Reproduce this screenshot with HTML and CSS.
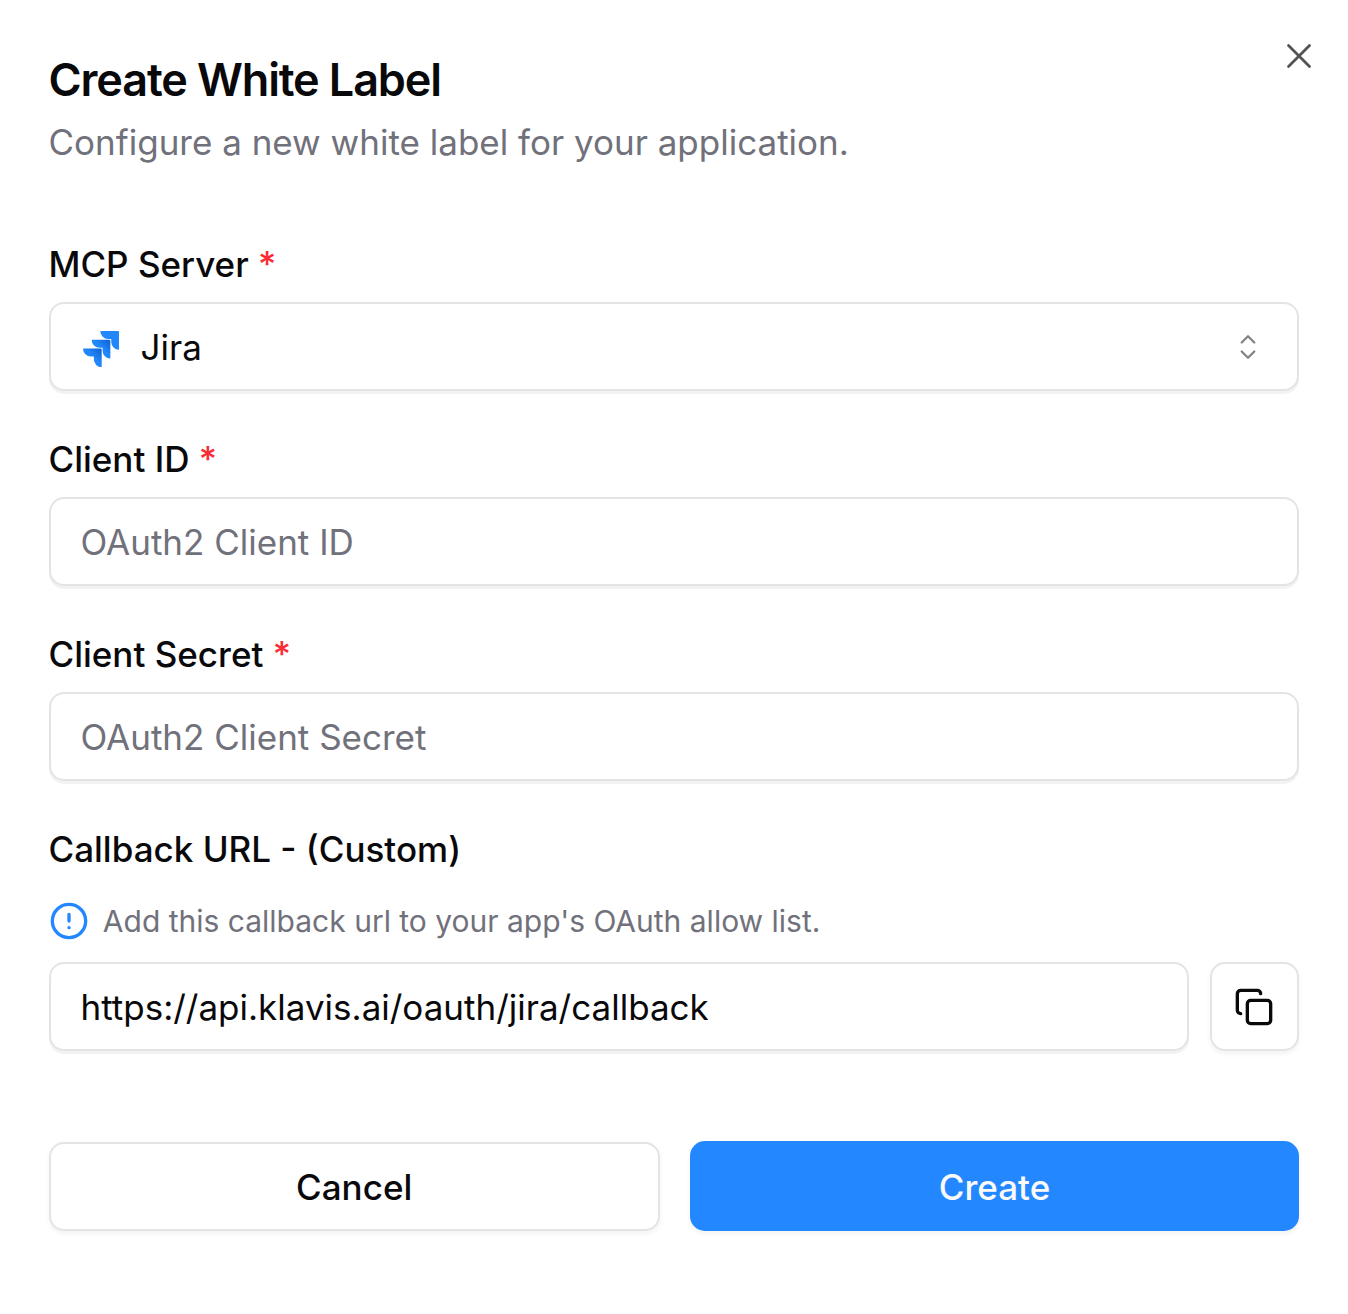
FILE: index.html
```html
<!DOCTYPE html>
<html lang="en">
<head>
<meta charset="utf-8">
<title>Create White Label</title>
<link rel="stylesheet" href="styles.css">
</head>
<body>
<main class="dialog">
  <button class="close" type="button" aria-label="Close">
    <svg viewBox="0 0 24 24" fill="none" stroke="currentColor" stroke-width="1.6" stroke-linecap="round"><path d="M18 6 6 18M6 6l12 12"/></svg>
  </button>
  <header class="header">
    <h1 class="title">Create White Label</h1>
    <p class="description">Configure a new white label for your application.</p>
  </header>
  <form class="form">
    <div class="field">
      <div class="label">MCP Server <span class="required">*</span></div>
      <div class="control select">
        <svg class="jira" viewBox="0 0 37 37">
          <defs>
            <linearGradient id="mid" x1="27" y1="9.500" x2="18.500" y2="18" gradientUnits="userSpaceOnUse"><stop offset="0.15" stop-color="#1468d8"/><stop offset="0.9" stop-color="#2187fb"/></linearGradient>
            <linearGradient id="low" x1="18" y1="18.500" x2="9.500" y2="27" gradientUnits="userSpaceOnUse"><stop offset="0.15" stop-color="#1468d8"/><stop offset="0.9" stop-color="#2187fb"/></linearGradient>
          </defs>
          <path fill="#2187fb" d="M36.100 0H17.800a8.200 8.200 0 0 0 8.200 8.200h3v3.100a8.200 8.200 0 0 0 8 8V.9a.9.9 0 0 0-.9-.9z"/>
          <path fill="url(#mid)" d="M27.200 9H8.900a8.200 8.200 0 0 0 8.200 8.200h3v3.100a8.200 8.200 0 0 0 8 8V9.900a.9.9 0 0 0-.9-.9z"/>
          <path fill="url(#low)" d="M18.300 18H0a8.200 8.200 0 0 0 8.200 8.200h3v3.100a8.200 8.200 0 0 0 8 8V18.900a.9.9 0 0 0-.9-.9z"/>
        </svg>
        <span>Jira</span>
        <svg class="chevrons" viewBox="0 0 16 26" fill="none" stroke="currentColor" stroke-width="2.300" stroke-linecap="round" stroke-linejoin="round"><path d="m1.700 8.500 6.300-6.300 6.300 6.300M1.700 17.500l6.300 6.300 6.300-6.300"/></svg>
      </div>
    </div>
    <div class="field">
      <label class="label" for="client-id">Client ID <span class="required">*</span></label>
      <input class="control" id="client-id" placeholder="OAuth2 Client ID">
    </div>
    <div class="field">
      <label class="label" for="client-secret">Client Secret <span class="required">*</span></label>
      <input class="control" id="client-secret" placeholder="OAuth2 Client Secret">
    </div>
    <div class="field callback">
      <label class="label" for="callback">Callback URL - (Custom)</label>
      <div class="hint">
        <svg class="alert" viewBox="0 0 24 24" fill="none" stroke="currentColor" stroke-width="2" stroke-linecap="round"><circle cx="12" cy="12" r="10"/><path d="M12 8v4M12 16h.01"/></svg>
        <span>Add this callback url to your app's OAuth allow list.</span>
      </div>
      <div class="copy-row">
        <input class="control" id="callback" value="https://api.klavis.ai/oauth/jira/callback" readonly>
        <button class="button copy" type="button" aria-label="Copy">
          <svg viewBox="0 0 24 24" fill="none" stroke="currentColor" stroke-width="2" stroke-linecap="round" stroke-linejoin="round"><rect x="8" y="8" width="14" height="14" rx="2"/><path d="M4 16c-1.100 0-2-.9-2-2V4c0-1.100.9-2 2-2h10c1.100 0 2 .9 2 2"/></svg>
        </button>
      </div>
    </div>
    <footer class="actions">
      <button class="button" type="button">Cancel</button>
      <button class="button primary" type="button">Create</button>
    </footer>
  </form>
</main>
</body>
</html>
```
FILE: styles.css
```css
* { box-sizing: border-box; }
body {
  margin: 0;
  background: #fff;
  color: #09090b;
  font: 400 35px/50px Inter, sans-serif;
  font-variation-settings: "opsz" 14;
  letter-spacing: 0;
}
button, input { font: inherit; letter-spacing: inherit; color: inherit; font-variation-settings: inherit; }
svg { display: block; flex: none; }
.dialog { position: relative; height: 1314px; padding: 57px 49.4px 0 48.5px; }
.close {
  position: absolute;
  top: 35px;
  right: 28px;
  padding: 0;
  border: 0;
  background: none;
  color: #535354;
}
.close svg { width: 42px; height: 42px; }
.header { height: 182px; }
.title { margin: 0 0 15px; font-size: 45px; line-height: 45px; font-weight: 600; letter-spacing: -1.125px; }
.description { margin: 0; color: #71717b; }
.field { display: flex; flex-direction: column; gap: 13px; margin-bottom: 43px; }
.label { font-weight: 500; }
.required { color: #fb2c36; }
.control {
  display: flex;
  align-items: center;
  width: 100%;
  height: 89px;
  padding: 0 30px;
  border: 2px solid #e4e4e6;
  border-radius: 15px;
  background: #fff;
  box-shadow: 0 3px 0 rgba(0, 0, 0, .05);
  outline: 0;
}
.control::placeholder { color: #71717b; opacity: 1; }
.select { gap: 22px; }
.jira { width: 36px; height: 36px; margin: 4px 0 0 2px; }
.chevrons { width: 16px; height: 26px; margin: 0 11px 0 auto; color: #848485; }
.callback { gap: 0; margin-bottom: 91px; }
.hint { display: flex; align-items: center; gap: 15px; height: 46px; margin: 24px 0 18px; font-size: 30px; line-height: 40px; color: #71717b; }
.alert { width: 40px; height: 40px; color: #2388ff; }
.copy-row { display: flex; gap: 20.6px; }
.copy-row .control { flex: 1; min-width: 0; }
.button {
  display: flex;
  align-items: center;
  justify-content: center;
  height: 89px;
  padding: 1px 0 0;
  border: 2px solid #e4e4e6;
  border-radius: 15px;
  background: #fff;
  box-shadow: 0 2.5px 5px rgba(0, 0, 0, .05);
  font-weight: 500;
}
.copy { width: 89px; padding: 0; }
.copy svg { width: 40px; height: 40px; }
.actions { display: grid; grid-template-columns: 611fr 609fr; gap: 30px; margin-right: -.6px; }
.primary { height: 90px; margin-top: -1px; padding-top: 2px; border: 0; background: #2388ff; color: #fafafa; }
.hint span { margin-left: -.7px; }
```
